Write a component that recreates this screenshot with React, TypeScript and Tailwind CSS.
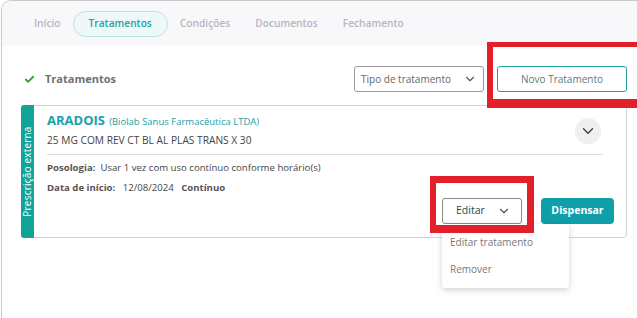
import { Check, ChevronDown } from 'lucide-react';

const tabs = ['Início', 'Tratamentos', 'Condições', 'Documentos', 'Fechamento'];

function Tabs() {
  return (
    <div className="flex items-center h-[45px] bg-[#f8f8fb] pl-[32px] gap-[25px]">
      {tabs.map((t) =>
        t === 'Tratamentos' ? (
          <div
            key={t}
            className="h-[26px] px-[15px] -mx-[13px] flex items-center rounded-full border border-[#b9e3e0] bg-[#eef8f8] text-[#1fa5a1] font-semibold text-[10.2px]"
          >
            {t}
          </div>
        ) : (
          <div key={t} className="text-[10.2px] font-semibold text-[#b6b6bd]">
            {t}
          </div>
        )
      )}
    </div>
  );
}

function Card() {
  return (
    <div className="relative ml-[19px] mr-[10px] flex h-[133px] rounded-[4px] border border-[#d2d2d2] bg-white">
      <div className="shrink-0 w-[13px] bg-[#12a39b] rounded-l-[3px] flex items-center justify-center -ml-px -my-px overflow-visible">
        <span className="-rotate-90 whitespace-nowrap text-white text-[10px] tracking-[0.2px]">
          Prescrição externa
        </span>
      </div>
      <div className="flex-1 min-w-0 pl-[13px] pr-[12px] pt-[4px]">
        <div className="flex items-start justify-between">
          <div>
            <div className="text-[#1aa0a6] leading-[18px]">
              <span className="font-bold text-[13px]">ARADOIS</span>{' '}
              <span className="text-[9.5px]">(Biolab Sanus Farmacêutica LTDA)</span>
            </div>
            <div className="mt-px text-[10.2px] text-[#444] leading-[16px]">
              25 MG COM REV CT BL AL PLAS TRANS X 30
            </div>
          </div>
          <div className="mt-[8px] mr-[13px] w-[26px] h-[26px] rounded-full bg-[#efefef] flex items-center justify-center">
            <ChevronDown size={18} strokeWidth={2} className="text-[#3c4a5c]" />
          </div>
        </div>
        <div className="mt-[6px] mr-[11px] border-t border-[#dcdcdc]" />
        <div className="mt-[6px] text-[9.6px] text-[#444] leading-[14px]">
          <span className="font-bold text-[#555]">Posologia:</span>&nbsp; Usar 1 vez com uso contínuo conforme horário(s)
        </div>
        <div className="mt-[6px] text-[9.6px] text-[#444] leading-[14px]">
          <span className="font-bold text-[#555]">Data de início:</span>&nbsp;&nbsp; 12/08/2024&nbsp;&nbsp;{' '}
          <span className="font-bold text-[#555]">Contínuo</span>
        </div>
        <div className="flex justify-end gap-[19px] mt-[3px]">
          <button className="w-[80px] h-[26px] rounded-[3px] border border-[#8a8a8a] flex items-center pl-[13px] gap-[12px] text-[10.5px] text-[#1f4a50]">
            Editar
            <ChevronDown size={14} strokeWidth={2} className="text-[#555]" />
          </button>
          <button className="w-[73px] h-[26px] rounded-[4px] bg-[#0e9fa8] text-white font-bold text-[10.5px]">
            Dispensar
          </button>
        </div>
      </div>
    </div>
  );
}

export default function App() {
  return (
    <div className="w-[637px] h-[318px] bg-white overflow-hidden" style={{ fontFamily: '"Open Sans", sans-serif' }}>
      <div className="relative ml-px h-[318px] rounded-tl-[10px] border-l border-t border-[#c9c9c9] overflow-hidden">
        <Tabs />
        <div className="flex items-center h-[59px] pt-[7px] pl-[22px] pr-[10px]">
          <Check size={11} strokeWidth={4} className="text-[#33a033]" />
          <span className="ml-[10px] text-[11px] font-bold text-[#6e7178]">Tratamentos</span>
          <div className="ml-auto flex items-center gap-[13px]">
            <div className="w-[130px] h-[26px] rounded-[3px] border border-[#9a9a9a] flex items-center justify-between pl-[6px] pr-[6px] text-[10px] text-[#666]">
              Tipo de tratamento
              <ChevronDown size={14} strokeWidth={2} className="text-[#555]" />
            </div>
            <div className="w-[130px] h-[26px] rounded-[3px] border border-[#1d9fa6] flex items-center justify-center text-[10px] text-[#5d7a80]">
              Novo Tratamento
            </div>
          </div>
        </div>
        <Card />

        {/* dropdown do Editar */}
        <div className="absolute left-[440px] top-[223px] w-[127px] h-[64px] bg-white rounded-[3px] shadow-[0_2px_6px_rgba(0,0,0,0.18)] px-[8px] pt-[10px] text-[10px] text-[#777]">
          <div className="leading-[16px]">Editar tratamento</div>
          <div className="leading-[16px] mt-[11px]">Remover</div>
        </div>

        {/* marcações vermelhas */}
        <div className="absolute left-[485px] top-[41px] w-[160px] h-[66px] border-t-[5px] border-l-[6px] border-b-[9px] border-r-[8px] border-[#e3202a]" />
        <div className="absolute left-[428px] top-[175px] w-[104px] h-[57px] border-t-[7px] border-l-[6px] border-b-[8px] border-r-[7px] border-[#e3202a]" />
      </div>
    </div>
  );
}
